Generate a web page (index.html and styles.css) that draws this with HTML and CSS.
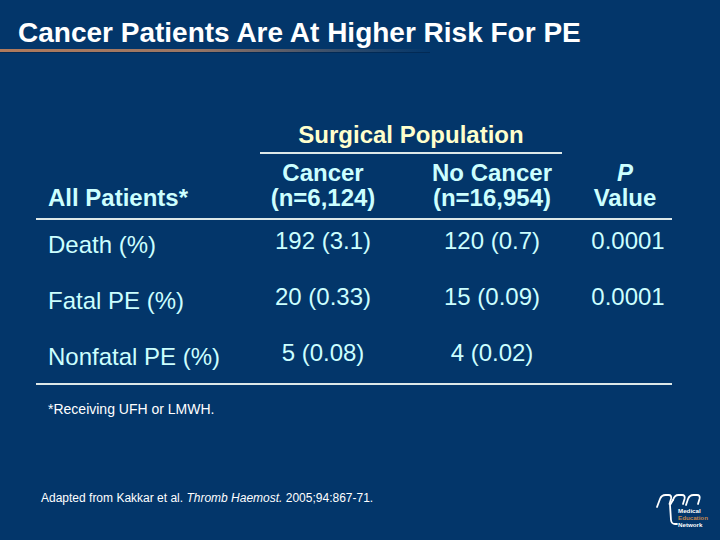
FILE: index.html
```html
<!DOCTYPE html>
<html>
<head>
<meta charset="utf-8">
<link rel="stylesheet" href="styles.css">
</head>
<body>
<div class="slide">
  <h1 class="title">Cancer Patients Are At Higher Risk For PE</h1>
  <div class="title-rule"></div>

  <div class="table">
    <div class="cell"></div>
    <div class="group">Surgical Population</div>
    <div class="cell"></div>

    <div class="hd hd-first">All Patients*</div>
    <div class="hd">Cancer<br>(n=6,124)</div>
    <div class="hd">No Cancer<br>(n=16,954)</div>
    <div class="hd"><i>P</i><br>Value</div>

    <div class="rule"></div>

    <div class="lbl">Death (%)</div>
    <div class="val">192 (3.1)</div>
    <div class="val">120 (0.7)</div>
    <div class="val val-p">0.0001</div>

    <div class="lbl">Fatal PE (%)</div>
    <div class="val">20 (0.33)</div>
    <div class="val">15 (0.09)</div>
    <div class="val val-p">0.0001</div>

    <div class="lbl last">Nonfatal PE (%)</div>
    <div class="val">5 (0.08)</div>
    <div class="val">4 (0.02)</div>
    <div class="val val-p"></div>

    <div class="rule"></div>
  </div>

  <p class="footnote">*Receiving UFH or LMWH.</p>

  <div class="footer">
    <p class="source">Adapted from Kakkar et al. <i>Thromb Haemost.</i> 2005;94:867-71.</p>
    <svg class="logo" width="62" height="38" viewBox="0 0 62 38">
      <g fill="none" stroke="#ffffff" stroke-width="1.8" stroke-linecap="round" stroke-linejoin="round">
        <path d="M2 14 L5 6 Q6.5 2 10.5 2 L13.5 2 Q17 2 16 6 L14.5 11"/>
        <path d="M18 7 Q19.5 2 23.5 2 L27 2 Q30.5 2 29.5 6 L28 11"/>
        <path d="M18 7 L15 12 L16 27 Q16.5 31 20 31 L22 31"/>
        <path d="M31 12 L33 6 Q34.5 2 38.5 2 L42 2 Q45.5 2 44.5 6 L43 11"/>
      </g>
      <text x="23" y="20" class="logo-t">Medical</text>
      <text x="23" y="27" class="logo-t logo-e">Education</text>
      <text x="23" y="34" class="logo-t">Network</text>
    </svg>
  </div>
</div>
</body>
</html>
```

FILE: styles.css
```css
html, body {
  margin: 0;
  padding: 0;
}
body {
  background: #03366a;
  font-family: "Liberation Sans", Arial, sans-serif;
  width: 720px;
  height: 540px;
  overflow: hidden;
}
.slide {
  width: 720px;
  height: 540px;
  display: flex;
  flex-direction: column;
}
.title {
  margin: 0;
  padding: 17px 0 0 18px;
  font-size: 28px;
  line-height: 32px;
  font-weight: bold;
  color: #ffffff;
}
.title-rule {
  width: 430px;
  height: 3px;
  background: linear-gradient(to right, #b07a5c 0%, #9a7664 45%, rgba(120,110,110,0.4) 80%, rgba(3,54,106,0) 100%);
  box-shadow: 0 1px 0 #022a55;
}
.table {
  margin: 69px 0 0 36px;
  width: 636px;
  display: grid;
  grid-template-columns: 204px 166px 172px 94px;
  color: #ccffff;
  font-size: 24px;
}
.group {
  grid-column: 2 / 4;
  margin: 0 16px 0 20px;
  text-align: center;
  color: #ffffcc;
  font-weight: bold;
  line-height: 28px;
  padding-bottom: 3px;
  border-bottom: 2px solid #dde8e8;
}
.hd {
  margin-top: 6px;
  padding-bottom: 8px;
  text-align: center;
  font-weight: bold;
  line-height: 25px;
  align-self: end;
}
.hd-first {
  text-align: left;
  padding-left: 12px;
}
.rule {
  grid-column: 1 / -1;
  height: 2px;
  background: #dde8e8;
}
.lbl {
  padding: 11px 0 17px 12px;
  line-height: 28px;
}
.lbl.last {
  padding-bottom: 12px;
}
.val {
  padding-top: 7px;
  line-height: 28px;
  text-align: center;
}
.val-p {
  padding-left: 6px;
}
.footnote {
  margin: 16px 0 0 48px;
  font-size: 14px;
  line-height: 16px;
  color: #ffffff;
}
.footer {
  margin-top: 73px;
  display: flex;
  align-items: flex-start;
}
.source {
  margin: 0 0 0 41px;
  font-size: 12px;
  line-height: 16px;
  color: #ffffff;
}
.logo {
  margin: 3px 3px 0 auto;
  display: block;
}
.logo-t {
  font-family: "Liberation Sans", Arial, sans-serif;
  font-size: 6.2px;
  font-weight: bold;
  fill: #ffffff;
}
.logo-e {
  fill: #c4874c;
}
```
